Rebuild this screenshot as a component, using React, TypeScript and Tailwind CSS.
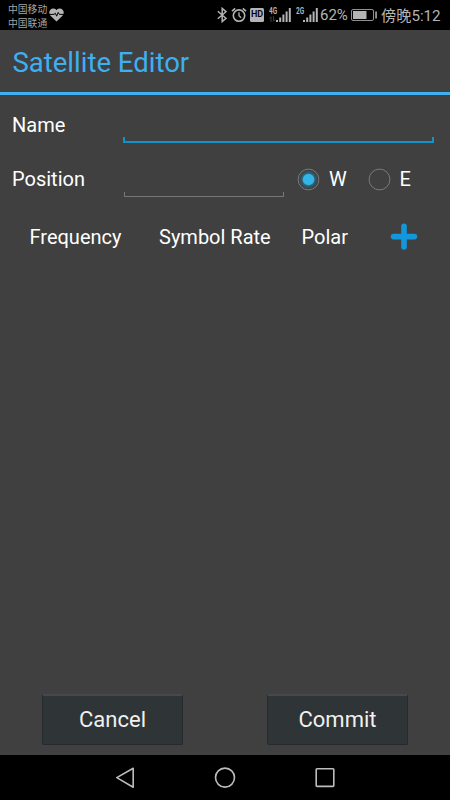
import React from 'react';

const BluetoothIcon = () => (
  <svg width="10" height="16" viewBox="0 0 10 16" fill="none" stroke="#b4b4b4" strokeWidth="1.5">
    <path d="M0.8 4.2L9 11.3L5.2 14.6V1.4L9 4.7L0.8 11.8" />
  </svg>
);

const AlarmIcon = () => (
  <svg width="16" height="16" viewBox="0 0 16 16" fill="none" stroke="#b4b4b4" strokeWidth="1.6">
    <circle cx="8" cy="8.6" r="5.7" />
    <path d="M8 5.2V8.8L10.2 10.8" strokeWidth="1.3" />
    <path d="M1 4.2L4.2 1.4M15 4.2L11.8 1.4" />
  </svg>
);

const SignalIcon = () => (
  <svg width="15" height="15" viewBox="0 0 15 15" fill="#b4b4b4">
    <rect x="0" y="12" width="2" height="2" />
    <rect x="3.2" y="9.5" width="2" height="4.5" />
    <rect x="6.4" y="6.5" width="2" height="7.5" />
    <rect x="9.6" y="3.5" width="2" height="10.5" />
    <rect x="12.8" y="0" width="2" height="14" />
  </svg>
);

const HeartIcon = () => (
  <svg width="15" height="14" viewBox="0 0 15 14">
    <path d="M7.5 13.4L1.3 7.4C-1.4 4 1.6 0.2 4.6 0.6C6 0.7 6.9 1.5 7.5 2.3C8.1 1.5 9 0.7 10.4 0.6C13.4 0.2 16.4 4 13.7 7.4Z" fill="#b4b4b4" />
    <path d="M0 6.4H5L6.3 5.2L7.7 8.2L9.2 4.4L10.4 6.4H15" fill="none" stroke="#000" strokeWidth="1" />
  </svg>
);

interface NetworkProps {
  label: string;
  active?: boolean;
}

const Network = ({ label, active }: NetworkProps) => (
  <div className="relative flex h-[15px] w-[22px] justify-end">
    <span className="absolute left-0 top-0 text-[9px] leading-[7px] font-bold origin-left scale-x-[0.72]">{label}</span>
    {active && (
      <svg className="absolute left-0 top-[8px]" width="7" height="6" viewBox="0 0 7 6" fill="none" stroke="#3c3c3c">
        <path d="M2 6V0.8L0.6 2.4M4.6 0V5.2L6.2 3.6" />
      </svg>
    )}
    <SignalIcon />
  </div>
);

const StatusBar = () => (
  <div className="flex h-[30px] bg-black text-[#b4b4b4]">
    <div className="w-[42px] pt-[2px] pl-2 text-[9.8px] leading-[14px] font-['Noto_Sans_CJK_SC',sans-serif] text-[#a4a4a4] whitespace-nowrap">
      <p>中国移动</p>
      <p>中国联通</p>
    </div>
    <div className="ml-[7px] mt-[8px]"><HeartIcon /></div>
    <div className="ml-[153px] mt-[7px]"><BluetoothIcon /></div>
    <div className="ml-[4px] mt-[7px]"><AlarmIcon /></div>
    <div className="ml-[3px] mt-[8px] flex h-[14px] w-[14px] items-center justify-center rounded-[1.5px] bg-[#b4b4b4] text-[9px] font-semibold text-black">HD</div>
    <div className="ml-[5px] mt-[8px]"><Network label="4G" active /></div>
    <div className="ml-[5px] mt-[8px]"><Network label="2G" /></div>
    <span className="ml-[2px] w-[31px] text-[15px] leading-[30px] whitespace-nowrap">62%</span>
    <svg className="mt-[9px]" width="27" height="12" viewBox="0 0 27 12">
      <rect x="0.5" y="0.5" width="22" height="11" rx="1.5" fill="none" stroke="#909090" />
      <rect x="2" y="2" width="13.5" height="8" fill="#b4b4b4" />
      <rect x="24.3" y="2.5" width="1.5" height="7" fill="#b4b4b4" />
    </svg>
    <span className="ml-[3px] text-[15.2px] leading-[32px] whitespace-nowrap font-[Roboto,'Noto_Sans_CJK_SC',sans-serif]">傍晚5:12</span>
  </div>
);

interface RadioProps {
  label: string;
  checked?: boolean;
}

const Radio = ({ label, checked }: RadioProps) => (
  <div className="flex w-[70.5px] items-center gap-[9px]">
    <svg width="23" height="23" viewBox="0 0 23 23">
      <circle cx="11.5" cy="11.5" r="10.4" fill="none" stroke="#777b7d" />
      {checked && (
        <>
          <circle cx="11.5" cy="11.5" r="9" fill="#3a4d55" />
          <circle cx="11.5" cy="11.5" r="7.3" fill="#2d6379" />
          <circle cx="11.5" cy="11.5" r="5.8" fill="#33b5e5" />
        </>
      )}
    </svg>
    <span>{label}</span>
  </div>
);

const Button = ({ label }: { label: string }) => (
  <button className="h-[51px] w-[141px] rounded-[2px] border border-t-2 border-[#262a2c] border-t-[#46494b] bg-[#2f3437] pb-[1px] text-[22px] text-[#f0f0f0]">
    {label}
  </button>
);

const App = () => {
  return (
    <div className="flex h-[800px] w-[450px] flex-col overflow-hidden bg-[#404040] font-[Roboto,sans-serif] text-white">
      <StatusBar />

      <header className="h-[65px] border-b-[3px] border-[#3fb0f0] pl-[12.5px] text-[27.5px] leading-[65px] text-[#3eaff0]">
        Satellite Editor
      </header>

      <main className="flex-1 text-[20px] leading-[24px]">
        <div className="flex h-[48px] pl-[12px] pt-[18px]">
          <span className="w-[111px]">Name</span>
          <div className="mt-[24px] h-[6px] w-[311px] border-x-2 border-b-2 border-[#1092ca]" />
        </div>

        <div className="flex h-[54px] pl-[12px] pt-[24px]">
          <span className="w-[112px]">Position</span>
          <div className="mt-[25px] h-[5px] w-[160px] shrink-0 border border-t-0 border-[#777]" />
          <div className="ml-[13px] flex h-[24px] items-center">
            <Radio label="W" checked />
            <Radio label="E" />
          </div>
        </div>

        <div className="flex items-center pl-[29.5px] pt-[26px]">
          <span className="w-[129.5px]">Frequency</span>
          <span className="w-[142.5px]">Symbol Rate</span>
          <span className="w-[88.5px]">Polar</span>
          <svg width="28" height="28" viewBox="0 0 28 28" stroke="#1297dc" strokeWidth="5.6" strokeLinecap="round">
            <path d="M14 3.2V24M3.6 13.6H24.4" />
          </svg>
        </div>
      </main>

      <div className="flex h-[61px] gap-[84px] pl-[42px]">
        <Button label="Cancel" />
        <Button label="Commit" />
      </div>

      <nav className="flex h-[45px] items-center justify-center gap-[76px] bg-black">
        <svg width="24" height="24" viewBox="0 0 24 24" fill="none" stroke="#bdbdbd" strokeWidth="1.6" strokeLinejoin="round">
          <path d="M20.2 2.3V21.2L3.8 11.6Z" />
        </svg>
        <svg width="24" height="24" viewBox="0 0 24 24" fill="none" stroke="#bdbdbd" strokeWidth="1.6">
          <circle cx="12" cy="11.6" r="9.5" />
        </svg>
        <svg width="24" height="24" viewBox="0 0 24 24" fill="none" stroke="#bdbdbd" strokeWidth="1.6">
          <rect x="3.2" y="2.8" width="17.6" height="17.6" rx="0.8" />
        </svg>
      </nav>
    </div>
  );
};

export default App;
